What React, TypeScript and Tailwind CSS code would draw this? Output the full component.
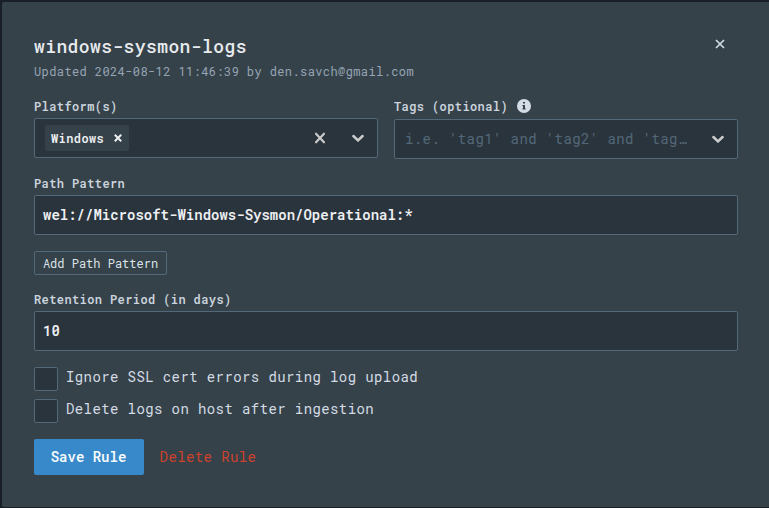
import type { ReactNode } from 'react';

function Label({ children }: { children: ReactNode }) {
  return <div className="flex h-4 items-center text-xs font-semibold leading-4 tracking-[0.4px] text-[#cbd4dd]">{children}</div>;
}

function Cross({ className, width = 2 }: { className: string; width?: number }) {
  return (
    <svg viewBox="0 0 10 10" className={className} fill="none" stroke="currentColor" strokeWidth={width}>
      <path d="M1 1l8 8M9 1l-8 8" />
    </svg>
  );
}

function Chevron() {
  return (
    <svg viewBox="0 0 12 8" className="h-2 w-3 text-[#cccccc]" fill="none" stroke="currentColor" strokeWidth="2.5" strokeLinecap="round">
      <path d="M1.4 2L6 6.4 10.6 2" />
    </svg>
  );
}

function CheckRow({ label }: { label: string }) {
  return (
    <label className="flex h-6 items-center gap-2">
      <span className="h-6 w-6 shrink-0 rounded-xs border border-[#536878] bg-[#2a343d]" />
      <span className="-mt-1 text-sm leading-5 tracking-[0.4px] text-[#d3dbe4]">{label}</span>
    </label>
  );
}

const field = 'flex h-10 items-center rounded-xs border border-[#536878] bg-[#2a343d]';

export default function App() {
  return (
    <div className="h-[508px] w-[769px] overflow-hidden bg-[#181f26] pb-px pl-0.5 pt-0.5 font-['Roboto_Mono','Liberation_Mono',monospace]">
      <div className="flex h-full flex-col rounded-l-xs bg-[#36424a] pl-8 pr-[31px] pt-[33px]">
        <div className="flex h-[63px] items-start justify-between">
          <div>
            <h1 className="text-lg font-medium leading-[22px] tracking-[0.4px] text-[#e8ebee]">windows-sysmon-logs</h1>
            <p className="mt-1.5 text-xs leading-4 tracking-[0.4px] text-[#95a5b4]">Updated 2024-08-12 11:46:39 by den.savch@gmail.com</p>
          </div>
          <button className="mr-[13px] mt-1 text-[#d3dbe4]" aria-label="Close">
            <Cross className="h-2.5 w-2.5" width={1.7} />
          </button>
        </div>

        <div className="flex h-[77px] gap-4">
          <div className="w-[344px]">
            <Label>Platform(s)</Label>
            <div className={`${field} mt-1`}>
              <div className="ml-2.5 flex h-[26px] w-[84px] items-center rounded-xs bg-[#36424a] pb-px pl-1.5 text-xs font-semibold tracking-[0.4px] text-[#eef0f2]">
                Windows
                <Cross className="ml-2.5 h-2 w-2" width={2.4} />
              </div>
              <svg viewBox="0 0 12 12" className="ml-auto mr-[26px] h-3 w-3 text-[#cccccc]" fill="none" stroke="currentColor" strokeWidth="2.1" strokeLinecap="round">
                <path d="M2 1.7l8 8.6M10 1.7l-8 8.6" />
              </svg>
              <span className="mr-[13px]"><Chevron /></span>
            </div>
          </div>
          <div className="w-[344px]">
            <Label>
              Tags (optional)
              <svg viewBox="0 0 14 14" className="ml-[9px] h-3.5 w-3.5">
                <circle cx="7" cy="7" r="7" fill="#d3dbe4" />
                <path d="M6 3h2v1.6H6zM5.4 6H8v3.6h.7v1H5.4v-1H6V7h-.6z" fill="#36424a" />
              </svg>
            </Label>
            <div className={`${field} mt-[5px] pl-2.5 pr-[13px] text-sm tracking-[0.4px] text-[#536878]`}>
              <span className="mr-auto whitespace-nowrap">i.e. 'tag1' and 'tag2' and 'tag…</span>
              <Chevron />
            </div>
          </div>
        </div>

        <div className="h-[76px]">
          <Label>Path Pattern</Label>
          <div className={`${field} mt-1 pl-2 text-sm font-semibold text-[#eef0f2]`}>wel://Microsoft-Windows-Sysmon/Operational:*</div>
        </div>
        <button className="h-6 w-[133px] shrink-0 rounded-xs border border-[#536878] text-xs text-[#dce2e8]">Add Path Pattern</button>
        <div className="mt-4 h-[76px]">
          <Label>Retention Period (in days)</Label>
          <div className={`${field} mt-1 pl-2 text-sm font-semibold text-[#eef0f2]`}>10</div>
        </div>
        <div className="flex flex-col gap-2">
          <CheckRow label="Ignore SSL cert errors during log upload" />
          <CheckRow label="Delete logs on host after ingestion" />
        </div>
        <div className="mt-4 flex items-center gap-4 text-sm">
          <button className="h-9 w-[110px] rounded-xs bg-[#3789c9] pr-px font-semibold text-[#f5f9fc]">Save Rule</button>
          <button className="-ml-[0.4px] tracking-[0.4px] text-[#cf412a]">Delete Rule</button>
        </div>
      </div>
    </div>
  );
}
